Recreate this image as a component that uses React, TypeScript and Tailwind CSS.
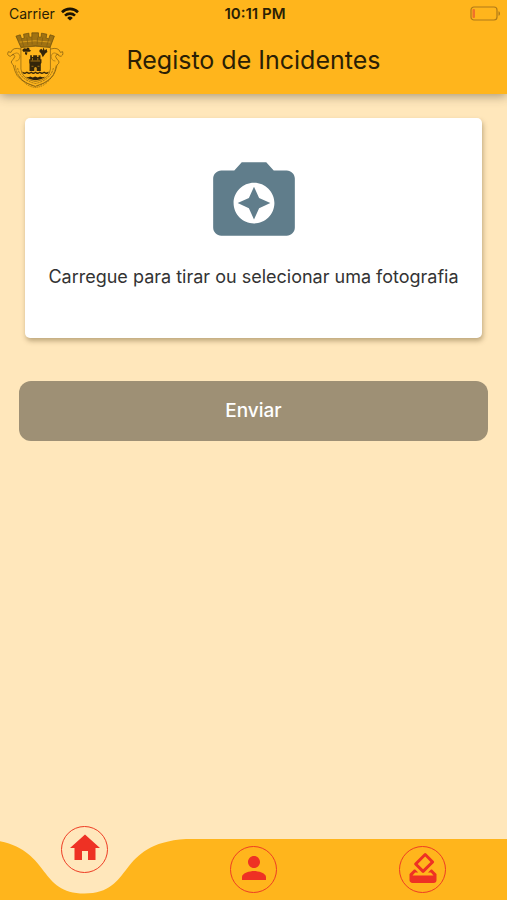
import { useState } from 'react';
import { MdCameraEnhance, MdHome, MdHowToVote, MdPerson } from 'react-icons/md';

function StatusBar() {
  return (
    <div className="grid grid-cols-3 items-center h-7 pl-[9px] pr-[6px] text-sm text-[#2b1f05]">
      <div className="flex items-center gap-[6px]">
        <span>Carrier</span>
        <svg viewBox="0 0 18 14" className="w-[18px] h-[14px]" fill="none" stroke="#1c1403" strokeWidth="2.6">
          <path d="M1 5.2a11.4 11.4 0 0 1 16 0" />
          <path d="M4 8.6a7.2 7.2 0 0 1 10 0" />
          <path d="M9 13.6 6.2 10.9a4 4 0 0 1 5.6 0z" fill="#1c1403" stroke="none" />
        </svg>
      </div>
      <span className="text-center text-[15px] font-semibold">10:11 PM</span>
      <svg viewBox="0 0 31 15" className="w-[31px] h-[15px] mb-[2px] justify-self-end" fill="none">
        <rect x="1" y="1" width="26" height="13" rx="3" stroke="#b07a18" strokeWidth="1.2" />
        <rect x="2.5" y="3" width="2.5" height="9" rx="1" fill="#f0722a" />
        <path d="M28.5 5.2c2 .6 2 4 0 4.6z" fill="#b07a18" />
      </svg>
    </div>
  );
}

function Crest() {
  return (
    <svg viewBox="20 20 172 172" className="w-[57px] h-[58px] shrink-0" fill="none" stroke="#7d5a10" strokeWidth="2.2" role="img" aria-label="Brasão">
      {/* Mural crown */}
      <g fill="#a07212" stroke="#63490e" strokeWidth="2">
        <path d="M47 34l13-4 4 12 8-2-2-12 16-3 1 12h8v-13h20v13h8l1-12 16 3-2 12 8 2 4-12 13 4-13 34q-43-9-88 0z" />
      </g>
      <path d="M58 52q46-8 93 0" stroke="#d99c1a" strokeWidth="3" />
      <path d="M64 43l6 20M80 38l3 22M95 38l1 21M112 38l-1 21M128 38l-4 22M146 43l-6 20" strokeWidth="2" />
      {/* Shield and scrolls */}
      <path d="M62 68q44-7 89 0v65q-2 31-45 38-42-7-44-38z" strokeWidth="2" />
      <path d="M62 73q-25-7-30 10l-8-2q-6 11 6 14l9-7q9 7 0 16-12 8 0 17l5 18q8 30 60 46M151 73q25-7 30 10l7-2q3 13-8 14l-9-7q-9 7 0 16 12 8 0 17l-5 18q-8 30-60 46" />
      <path d="M35 92q18-16 24 2-1 15-13 15M177 92q-18-16-24 2 1 15 13 15" strokeWidth="1.5" />
      <path d="M45 122q5 49 61 64 57-15 62-64M52 130q8 36 54 47 46-11 54-47" strokeWidth="2" strokeDasharray="7 2" />
      <path d="M58 156q18 30 48 33 31-3 49-33" strokeWidth="2.5" strokeDasharray="3 3" />
      {/* Charges */}
      <g fill="#33250a" stroke="none">
        <path d="M66 76q5-8 12-4l5-4q6 1 5 7l5 3-5 3H69zM75 82l7 1-3 9-5-4z" />
        <path d="M118 76l6-4 3 5 3-9 4 9 5-5 3 10q-6 2-10 10l-4 6-3-7q-2-8-7-9z" />
        <path d="M90 92h5v5h4v-5h12v5h4v-5h6v12h3v10l-2 4v21H88v-21l-1-4v-10h3z" />
        <path d="M67 141q6 6 13 0 7 6 13 0 7 6 13 0 7 6 13 0 7 6 13 0 7 6 13 0v5q-7 5-13-1-7 6-13 0-7 6-13 0-7 6-13 0-7 6-13 0-7 6-13 0z" />
        <path d="M76 156q7 4 14 0 8 5 15 0 8 5 15 0 8 4 16 0-10 10-30 11-20-1-30-11z" />
      </g>
      <path d="M91 109h29M94 125h6M112 125h6M97 100v7M113 100v7" stroke="#d7981a" strokeWidth="2" />
      <path d="M102 140v-10q4-6 8 0v10z" fill="#d7981a" stroke="none" />
    </svg>
  );
}

function Header() {
  return (
    <header className="relative bg-[#ffb51c] shadow-[0_2px_10px_rgba(60,50,30,0.45)]">
      <StatusBar />
      <div className="grid grid-cols-[57px_1fr_57px] items-center h-[66px] px-[7px] pb-[2px]">
        <Crest />
        <h1 className="text-center text-[25px] leading-8 text-[#2b1f05] whitespace-nowrap">Registo de Incidentes</h1>
      </div>
    </header>
  );
}

const tabs = [
  { label: 'Início', icon: MdHome },
  { label: 'Perfil', icon: MdPerson },
  { label: 'Votar', icon: MdHowToVote },
];

// The bar dips below the first tab, whose button is raised out of it
function BottomNav() {
  return (
    <nav className="relative h-[61px]">
      <svg viewBox="0 0 507 61" preserveAspectRatio="none" className="absolute inset-0 w-full h-full" fill="#ffb51c">
        <path d="M-17 0C54 4.5 34 54.5 84.5 54.5S115 4.5 186 0H507V61H-17z" />
      </svg>
      <div className="relative grid grid-cols-3 justify-items-center">
        {tabs.map(({ label, icon: Icon }, index) => (
          <button
            key={label}
            type="button"
            aria-label={label}
            className={`flex items-center justify-center w-[47px] h-[47px] pb-1 rounded-full border border-[#ee3d24] text-[#ee3124] ${
              index === 0 ? '-mt-[13px]' : 'mt-[7px]'
            }`}
          >
            <Icon className="w-9 h-9" />
          </button>
        ))}
      </div>
    </nav>
  );
}

export default function App() {
  const [photo, setPhoto] = useState<File | null>(null);

  return (
    <div className="flex flex-col min-h-screen overflow-hidden bg-[#ffe7bb] font-['Inter','Liberation_Sans',sans-serif]">
      <Header />
      <main className="flex flex-col flex-1 pt-6">
        <label className="flex flex-col items-center mx-[25px] h-[220px] pt-8 bg-white rounded-[5px] shadow-[1px_3px_5px_rgba(90,70,30,0.4)] cursor-pointer">
          <MdCameraEnhance className="w-[98px] h-[98px] text-[#607d8b]" />
          <span className="mt-[15px] text-lg leading-7 text-[#333333] whitespace-nowrap">
            Carregue para tirar ou selecionar uma fotografia
          </span>
          <input
            type="file"
            accept="image/*"
            className="sr-only"
            onChange={(e) => setPhoto(e.target.files?.[0] ?? null)}
          />
        </label>
        <button
          type="button"
          disabled={!photo}
          className="mx-[19px] mt-[43px] h-[60px] rounded-xl bg-[#9e9075] text-[19px] font-medium text-white"
        >
          Enviar
        </button>
      </main>
      <BottomNav />
    </div>
  );
}
